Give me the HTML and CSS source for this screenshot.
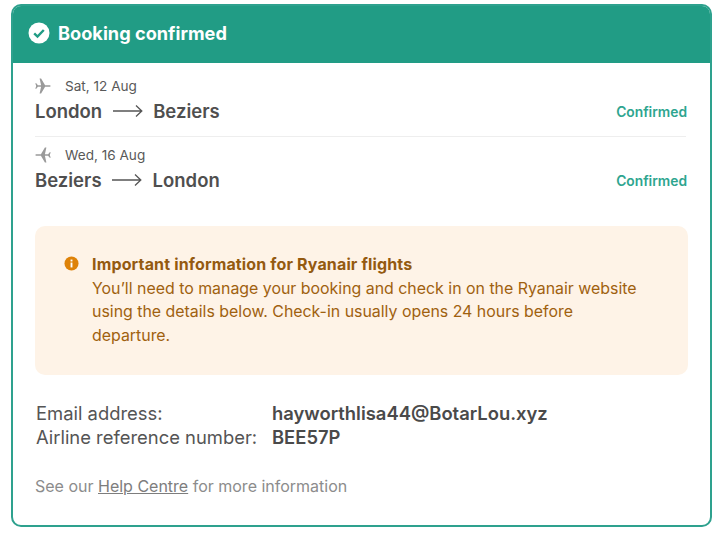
FILE: index.html
```html
<!DOCTYPE html>
<html lang="en">
<head>
<meta charset="utf-8">
<title>Booking confirmed</title>
<link rel="stylesheet" href="styles.css">
</head>
<body>
<main class="card">
  <header class="card-header">
    <svg class="check" viewBox="0 0 22 22" aria-hidden="true"><circle cx="11" cy="11" r="10.5" fill="#fff"/><path d="M6.2 11.4l3.3 3.2 6.3-6.6" fill="none" stroke="#219c85" stroke-width="2.4"/></svg>
    <h1 class="title">Booking confirmed</h1>
  </header>
  <section class="legs">
    <div class="leg leg-first">
      <div class="leg-main">
        <div class="leg-date">
          <svg class="plane" viewBox="0 0 16 16" aria-hidden="true"><path d="M0.3 5.2h1l1.6 2.1h3.2L4.6 0.6h1.5l4 6.7h4.2c.8 0 1.4.3 1.4.7s-.6.7-1.4.7h-4.2l-4 6.7H4.6l1.5-6.7H2.9L1.3 10.8h-1L1.2 8z"/></svg>
          <span>Sat, 12 Aug</span>
        </div>
        <div class="route"><span>London</span>
          <svg class="arrow" viewBox="0 0 30 14" aria-hidden="true"><path d="M0 7h28.5M23 1.5L28.8 7 23 12.5" fill="none" stroke="#555" stroke-width="1.3"/></svg>
          <span>Beziers</span></div>
      </div>
      <span class="status">Confirmed</span>
    </div>
    <div class="leg">
      <div class="leg-main">
        <div class="leg-date">
          <svg class="plane" viewBox="0 0 16 16" aria-hidden="true"><path d="M15.7 5.2h-1l-1.6 2.1H9.9l1.5-6.7H9.9l-4 6.7H1.7C.9 7.3.3 7.6.3 8s.6.7 1.4.7h4.2l4 6.7h1.5L9.9 8.7h3.2l1.6 2.1h1L14.8 8z"/></svg>
          <span>Wed, 16 Aug</span>
        </div>
        <div class="route"><span>Beziers</span>
          <svg class="arrow" viewBox="0 0 30 14" aria-hidden="true"><path d="M0 7h28.5M23 1.5L28.8 7 23 12.5" fill="none" stroke="#555" stroke-width="1.3"/></svg>
          <span>London</span></div>
      </div>
      <span class="status">Confirmed</span>
    </div>
  </section>
  <section class="notice">
    <svg class="info" viewBox="0 0 16 16" aria-hidden="true"><circle cx="8" cy="8" r="7.5" fill="#de8208"/><rect x="7" y="7" width="2" height="5.2" fill="#fff"/><rect x="7" y="3.8" width="2" height="2" fill="#fff"/></svg>
    <div class="notice-text">
      <strong>Important information for Ryanair flights</strong><br>
      You’ll need to manage your booking and check in on the Ryanair website using the details below. Check-in usually opens 24 hours before departure.
    </div>
  </section>
  <dl class="details">
    <dt>Email address:</dt><dd>hayworthlisa44@BotarLou.xyz</dd>
    <dt>Airline reference number:</dt><dd>BEE57P</dd>
  </dl>
  <p class="help">See our <a href="#">Help Centre</a> for more information</p>
</main>
</body>
</html>
```
FILE: styles.css
```css
* { box-sizing: border-box; }
html, body { margin: 0; background: #fff; }
body {
  padding: 4px 5px 0 11px;
  font-family: "Inter", "Liberation Sans", sans-serif;
  color: #4d4d4d;
}
.card {
  height: 523px;
  border: 2px solid #2ea18e;
  border-radius: 10px;
  overflow: hidden;
}
.card-header {
  display: flex;
  align-items: center;
  gap: 8px;
  height: 59px;
  margin: -2px -2px 0;
  padding: 0 0 2px 17px;
  background: #219c85;
  color: #fff;
}
.check { width: 22px; height: 22px; flex: none; }
.title { margin: 0; font-size: 18.2px; font-weight: 700; }
.legs { margin: 12px 24px 0 22px; }
.leg {
  display: flex;
  justify-content: space-between;
  align-items: flex-end;
  height: 55px;
}
.leg-first { height: 62px; border-bottom: 1px solid #eeeeee; padding-bottom: 13px; }
.leg-main { display: flex; flex-direction: column; gap: 4px; }
.leg-date { display: flex; align-items: center; gap: 14px; font-size: 13.6px; color: #595959; height: 18px; }
.plane { width: 16px; height: 16px; fill: #9a9a9a; }
.route { display: flex; align-items: center; gap: 10.5px; font-size: 18.5px; font-weight: 600; color: #4f4f4f; height: 24px; }
.arrow { width: 30px; height: 14px; }
.status { font-size: 13.8px; font-weight: 600; color: #2ea58f; margin-right: -1px; padding-bottom: 3px; }
.notice {
  display: flex;
  align-items: flex-start;
  gap: 13px;
  height: 149px;
  margin: 34px 22px 0;
  padding: 27px 43px 0 29px;
  background: #fef3e7;
  border-radius: 10px;
  color: #a0610f;
  font-size: 15.9px;
  line-height: 23.5px;
}
.info { width: 15px; height: 15px; flex: none; margin-top: 3px; }
.notice-text strong { font-weight: 700; font-size: 16px; letter-spacing: 0.15px; color: #945a10; }
.details {
  display: grid;
  grid-template-columns: 236px 1fr;
  margin: 26px 0 0 23px;
  font-size: 18.4px;
  line-height: 24px;
}
.details dt { color: #555; }
.details dd { margin: 0; font-weight: 600; color: #4a4a4a; }
.help { margin: 27px 0 0 22px; font-size: 16px; color: #8c8c8c; }
.help a { color: #7d7d7d; }
```
